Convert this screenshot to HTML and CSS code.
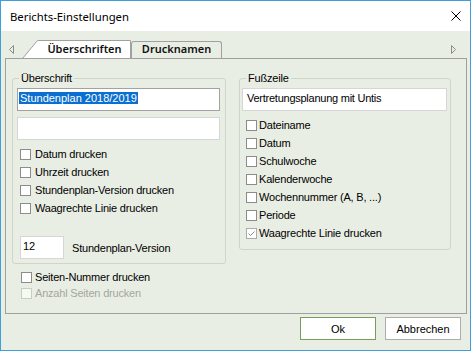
FILE: index.html
```html
<!DOCTYPE html>
<html lang="de">
<head>
  <meta charset="UTF-8">
  <title>Berichts-Einstellungen</title>
  <link rel="stylesheet" href="styles.css">
</head>
<body>
  <div class="window">
    <div class="titlebar">
      <span class="title">Berichts-Einstellungen</span>
      <svg class="close" width="10" height="10" viewBox="0 0 10 10">
        <path d="M0.5 0.5L9.5 9.5M9.5 0.5L0.5 9.5" stroke="#000" stroke-width="1" fill="none"/>
      </svg>
    </div>

    <div class="content">
      <div class="tabstrip">
        <svg class="arrow arrow-left" width="5" height="9" viewBox="0 0 5 9">
          <path d="M4.5 0.5L0.5 4.5L4.5 8.5Z" fill="none" stroke="#8c8c8c"/>
        </svg>
        <div class="tab tab-active">Überschriften</div>
        <div class="tab">Drucknamen</div>
        <svg class="arrow arrow-right" width="5" height="9" viewBox="0 0 5 9">
          <path d="M0.5 0.5L4.5 4.5L0.5 8.5Z" fill="none" stroke="#8c8c8c"/>
        </svg>
      </div>

      <div class="panel">
        <div class="column">
          <fieldset class="group group-left">
            <legend>Überschrift</legend>
            <div class="field field-focus"><span class="sel">Stundenplan 2018/2019</span></div>
            <div class="field field-empty"></div>
            <div class="checks">
              <label class="check"><span class="box"></span>Datum drucken</label>
              <label class="check"><span class="box"></span>Uhrzeit drucken</label>
              <label class="check"><span class="box"></span>Stundenplan-Version drucken</label>
              <label class="check"><span class="box"></span>Waagrechte Linie drucken</label>
            </div>
            <div class="version-row">
              <div class="field field-small">12</div>
              <span>Stundenplan-Version</span>
            </div>
          </fieldset>
          <div class="checks checks-below">
            <label class="check check-short"><span class="box"></span>Seiten-Nummer drucken</label>
            <label class="check check-short disabled"><span class="box"></span>Anzahl Seiten drucken</label>
          </div>
        </div>

        <fieldset class="group group-right">
          <legend>Fußzeile</legend>
          <div class="field field-footer">Vertretungsplanung mit Untis</div>
          <div class="checks">
            <label class="check"><span class="box"></span>Dateiname</label>
            <label class="check"><span class="box"></span>Datum</label>
            <label class="check"><span class="box"></span>Schulwoche</label>
            <label class="check"><span class="box"></span>Kalenderwoche</label>
            <label class="check"><span class="box"></span>Wochennummer (A, B, ...)</label>
            <label class="check"><span class="box"></span>Periode</label>
            <label class="check"><span class="box box-checked">
              <svg width="9" height="9" viewBox="0 0 9 9"><path d="M1.5 4.5L3.5 6.5L7.5 2.5" fill="none" stroke="#8a8a8a"/></svg>
            </span>Waagrechte Linie drucken</label>
          </div>
        </fieldset>
      </div>

      <div class="buttons">
        <button class="btn btn-default">Ok</button>
        <button class="btn">Abbrechen</button>
      </div>
    </div>
  </div>
</body>
</html>
```

FILE: styles.css
```css
body {
  margin: 0;
  font-family: "Liberation Sans", Arial, sans-serif;
  font-size: 11px;
  color: #000;
}

.window {
  width: 471px;
  height: 351px;
  box-sizing: border-box;
  border: 1px solid #3f9fd9;
  background-color: #e9eee4;
  display: flex;
  flex-direction: column;
}

.titlebar {
  height: 30px;
  flex: none;
  background-color: #fff;
  display: flex;
  align-items: center;
  justify-content: space-between;
  padding: 0 9px 0 9px;
}

.title {
  font-family: "Noto Sans", sans-serif;
  font-size: 11.3px;
  margin-top: 1px;
}

.close {
  display: block;
}

.content {
  flex: 1;
  padding: 0 3px 0 4px;
}

/* tabs */

.tabstrip {
  height: 27px;
  display: flex;
  align-items: flex-end;
}

.arrow {
  display: block;
  margin-bottom: 4px;
}

.arrow-left {
  margin-left: 4px;
  margin-right: 8px;
}

.arrow-right {
  margin-left: auto;
  margin-right: 11px;
}

.tab {
  box-sizing: border-box;
  width: 91px;
  height: 17px;
  border: 1px solid #a0a0a0;
  border-bottom: none;
  border-radius: 3px 3px 0 0;
  font-family: "Noto Sans", sans-serif;
  font-size: 11px;
  font-weight: 600;
  line-height: 14px;
  text-align: center;
  color: #111;
}

.tab-active {
  width: 109px;
  height: 18px;
  border: none;
  border-radius: 0;
  padding-left: 16px;
  padding-top: 1px;
  line-height: 15px;
  background: url("data:image/svg+xml,%3Csvg xmlns='http://www.w3.org/2000/svg' width='109' height='18'%3E%3Cpath d='M0.5 18.5L15.5 0.5H108.5V18.5' fill='%23fff' stroke='%23a0a0a0'/%3E%3C/svg%3E") no-repeat;
}

/* panel */

.panel {
  box-sizing: border-box;
  height: 256px;
  border: 1px solid #a0a0a0;
  padding: 13px 0 0 6px;
  display: flex;
  align-items: flex-start;
  gap: 13px;
}

.column {
  width: 214px;
}

.group {
  box-sizing: border-box;
  margin: 0;
  min-width: 0;
  border: 1px solid #d0d5cb;
  border-radius: 3px;
}

.group legend {
  font-size: 11px;
  line-height: 13px;
  padding: 0 2px;
  letter-spacing: -0.2px;
}

.group-left {
  width: 214px;
  padding: 0 5px 4px 4px;
}

.group-left legend {
  margin-left: 2px;
}

.group-right {
  width: 212px;
  padding: 0 3px 6px 2px;
}

.group-right legend {
  margin-left: 4px;
}

/* text fields */

.field {
  box-sizing: border-box;
  height: 23px;
  border: 1px solid #d6d6d6;
  background-color: #fff;
  padding: 3px 2px 0 2px;
  line-height: 13px;
  white-space: nowrap;
}

.field-focus {
  margin-top: 3px;
  border-color: #a2a2a2;
  padding-left: 1px;
}

.sel {
  background-color: #0a6fd0;
  color: #fff;
  padding: 0 1px;
}

.field-empty {
  margin-top: 6px;
}

.field-footer {
  margin-top: 3px;
  padding-left: 4px;
  letter-spacing: -0.25px;
}

.field-small {
  width: 44px;
}

/* check boxes */

.checks {
  display: flex;
  flex-direction: column;
}

.group-left .checks {
  margin-top: 6px;
  padding-left: 3px;
}

.group-right .checks {
  margin-top: 6px;
  padding-left: 4px;
}

.check {
  height: 18px;
  line-height: 16px;
  display: flex;
  align-items: flex-start;
  gap: 4px;
  white-space: nowrap;
  letter-spacing: -0.2px;
}

.group-right .check {
  gap: 2px;
}

.box {
  box-sizing: border-box;
  flex: none;
  width: 11px;
  height: 11px;
  margin-top: 3px;
  border: 1px solid #8c8c8c;
  background-color: #fff;
  display: flex;
  align-items: center;
  justify-content: center;
}

.box-checked {
  border-color: #ababab;
}

.box svg {
  display: block;
}

.checks-below {
  margin-top: 5px;
  padding-left: 9px;
}

.check-short {
  height: 16px;
  gap: 3px;
}

.disabled {
  color: #a3a79e;
}

.disabled .box {
  border-color: #c3d1b7;
  background-color: #f6f8f3;
}

.version-row {
  margin-top: 18px;
  padding-left: 3px;
  display: flex;
  align-items: center;
  gap: 8px;
  letter-spacing: -0.2px;
}

/* buttons */

.buttons {
  margin-top: 3px;
  padding-right: 6px;
  display: flex;
  justify-content: flex-end;
  gap: 9px;
}

.btn {
  box-sizing: border-box;
  width: 76px;
  height: 23px;
  padding: 0;
  border: 1px solid #adadad;
  background-color: #fff;
  font-family: "Liberation Sans", Arial, sans-serif;
  font-size: 11px;
  color: #000;
}

.btn-default {
  border-color: #74a05c;
}
```
